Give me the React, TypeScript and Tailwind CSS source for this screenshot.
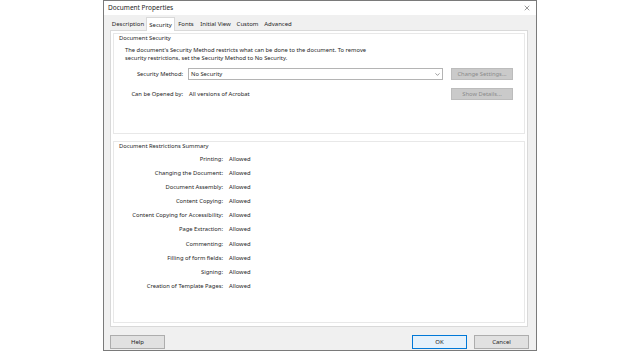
import React from 'react';
import { X, ChevronDown } from 'lucide-react';

const tabs = [
  { name: 'Description', width: 'w-[36px]', active: false },
  { name: 'Security', width: 'w-[29px]', active: true },
  { name: 'Fonts', width: 'w-[22px]', active: false },
  { name: 'Initial View', width: 'w-[37px]', active: false },
  { name: 'Custom', width: 'w-[27px]', active: false },
  { name: 'Advanced', width: 'w-[34px]', active: false },
];

const restrictions = [
  'Printing:',
  'Changing the Document:',
  'Document Assembly:',
  'Content Copying:',
  'Content Copying for Accessibility:',
  'Page Extraction:',
  'Commenting:',
  'Filling of form fields:',
  'Signing:',
  'Creation of Template Pages:',
];

const App = () => {
  return (
    <div className="w-[624px] h-[351px] bg-white flex font-['Noto_Sans',sans-serif] text-[5.8px] leading-[8px] text-[#1e1e1e] overflow-hidden">
      <div className="ml-[103px] w-[434px] h-[351px] border border-[#7a7a7a] bg-[#f0f0f0] flex flex-col">
        {/* Title bar */}
        <div className="h-[14px] bg-white flex items-center justify-between pl-[4px] pr-[5px]">
          <span className="text-[6.5px]">Document Properties</span>
          <X className="w-[8px] h-[8px] text-[#333]" strokeWidth={1.5} />
        </div>

        {/* Tabs */}
        <div className="flex items-end h-[14px] pl-[6px] mt-[1px] text-[6px]">
          {tabs.map((tab) => (
            <div
              key={tab.name}
              className={`${tab.width} flex items-center justify-center ${
                tab.active
                  ? 'h-[14px] bg-white border border-b-0 border-[#d9d9d9] relative top-[1px]'
                  : 'h-[12px]'
              }`}
            >
              {tab.name}
            </div>
          ))}
        </div>

        {/* Tab panel */}
        <div className="ml-[6px] mr-[8px] h-[297px] bg-white border border-[#d9d9d9] px-[2px] pt-[2px] flex flex-col gap-[7px]">
          {/* Document Security */}
          <div className="h-[101px] border border-[#e8e8e8] flex flex-col">
            <div className="pl-[5px] h-[9px]">Document Security</div>
            <div className="pl-[11px] mt-[3px]">
              <p>The document's Security Method restricts what can be done to the document. To remove</p>
              <p>security restrictions, set the Security Method to No Security.</p>
            </div>
            <div className="flex items-center mt-[6px]">
              <span className="w-[69px] text-right">Security Method:</span>
              <div className="ml-[5px] w-[255px] h-[12px] border border-[#b4b4b4] flex items-center justify-between pl-[2px] pr-[1px]">
                <span>No Security</span>
                <ChevronDown className="w-[7px] h-[7px] text-[#555]" strokeWidth={2} />
              </div>
              <button className="ml-[8px] w-[62px] h-[12px] bg-[#cacaca] border border-[#bcbcbc] text-[#8a8a8a]">
                Change Settings...
              </button>
            </div>
            <div className="flex items-center mt-[8px]">
              <span className="w-[69px] text-right">Can be Opened by:</span>
              <span className="ml-[6px] w-[262px]">All versions of Acrobat</span>
              <button className="w-[62px] h-[12px] bg-[#cacaca] border border-[#bcbcbc] text-[#8a8a8a]">
                Show Details...
              </button>
            </div>
          </div>

          {/* Document Restrictions Summary */}
          <div className="h-[182px] border border-[#e8e8e8] flex flex-col">
            <div className="pl-[5px] h-[9px]">Document Restrictions Summary</div>
            <div className="grid grid-cols-[109px_auto] gap-x-[6px] gap-y-[6.1px] mt-[4px]">
              {restrictions.map((label) => (
                <React.Fragment key={label}>
                  <span className="text-right">{label}</span>
                  <span>Allowed</span>
                </React.Fragment>
              ))}
            </div>
          </div>
        </div>

        {/* Buttons */}
        <div className="flex items-center mt-[8px] pl-[6px] pr-[7px] text-[6px]">
          <button className="w-[55px] h-[14px] bg-[#e1e1e1] border border-[#adadad]">Help</button>
          <div className="flex-1" />
          <button className="w-[55px] h-[14px] bg-[#e5f1fb] border border-[#0078d7]">OK</button>
          <button className="ml-[7px] w-[55px] h-[14px] bg-[#e1e1e1] border border-[#adadad]">Cancel</button>
        </div>
      </div>
    </div>
  );
};

export default App;
